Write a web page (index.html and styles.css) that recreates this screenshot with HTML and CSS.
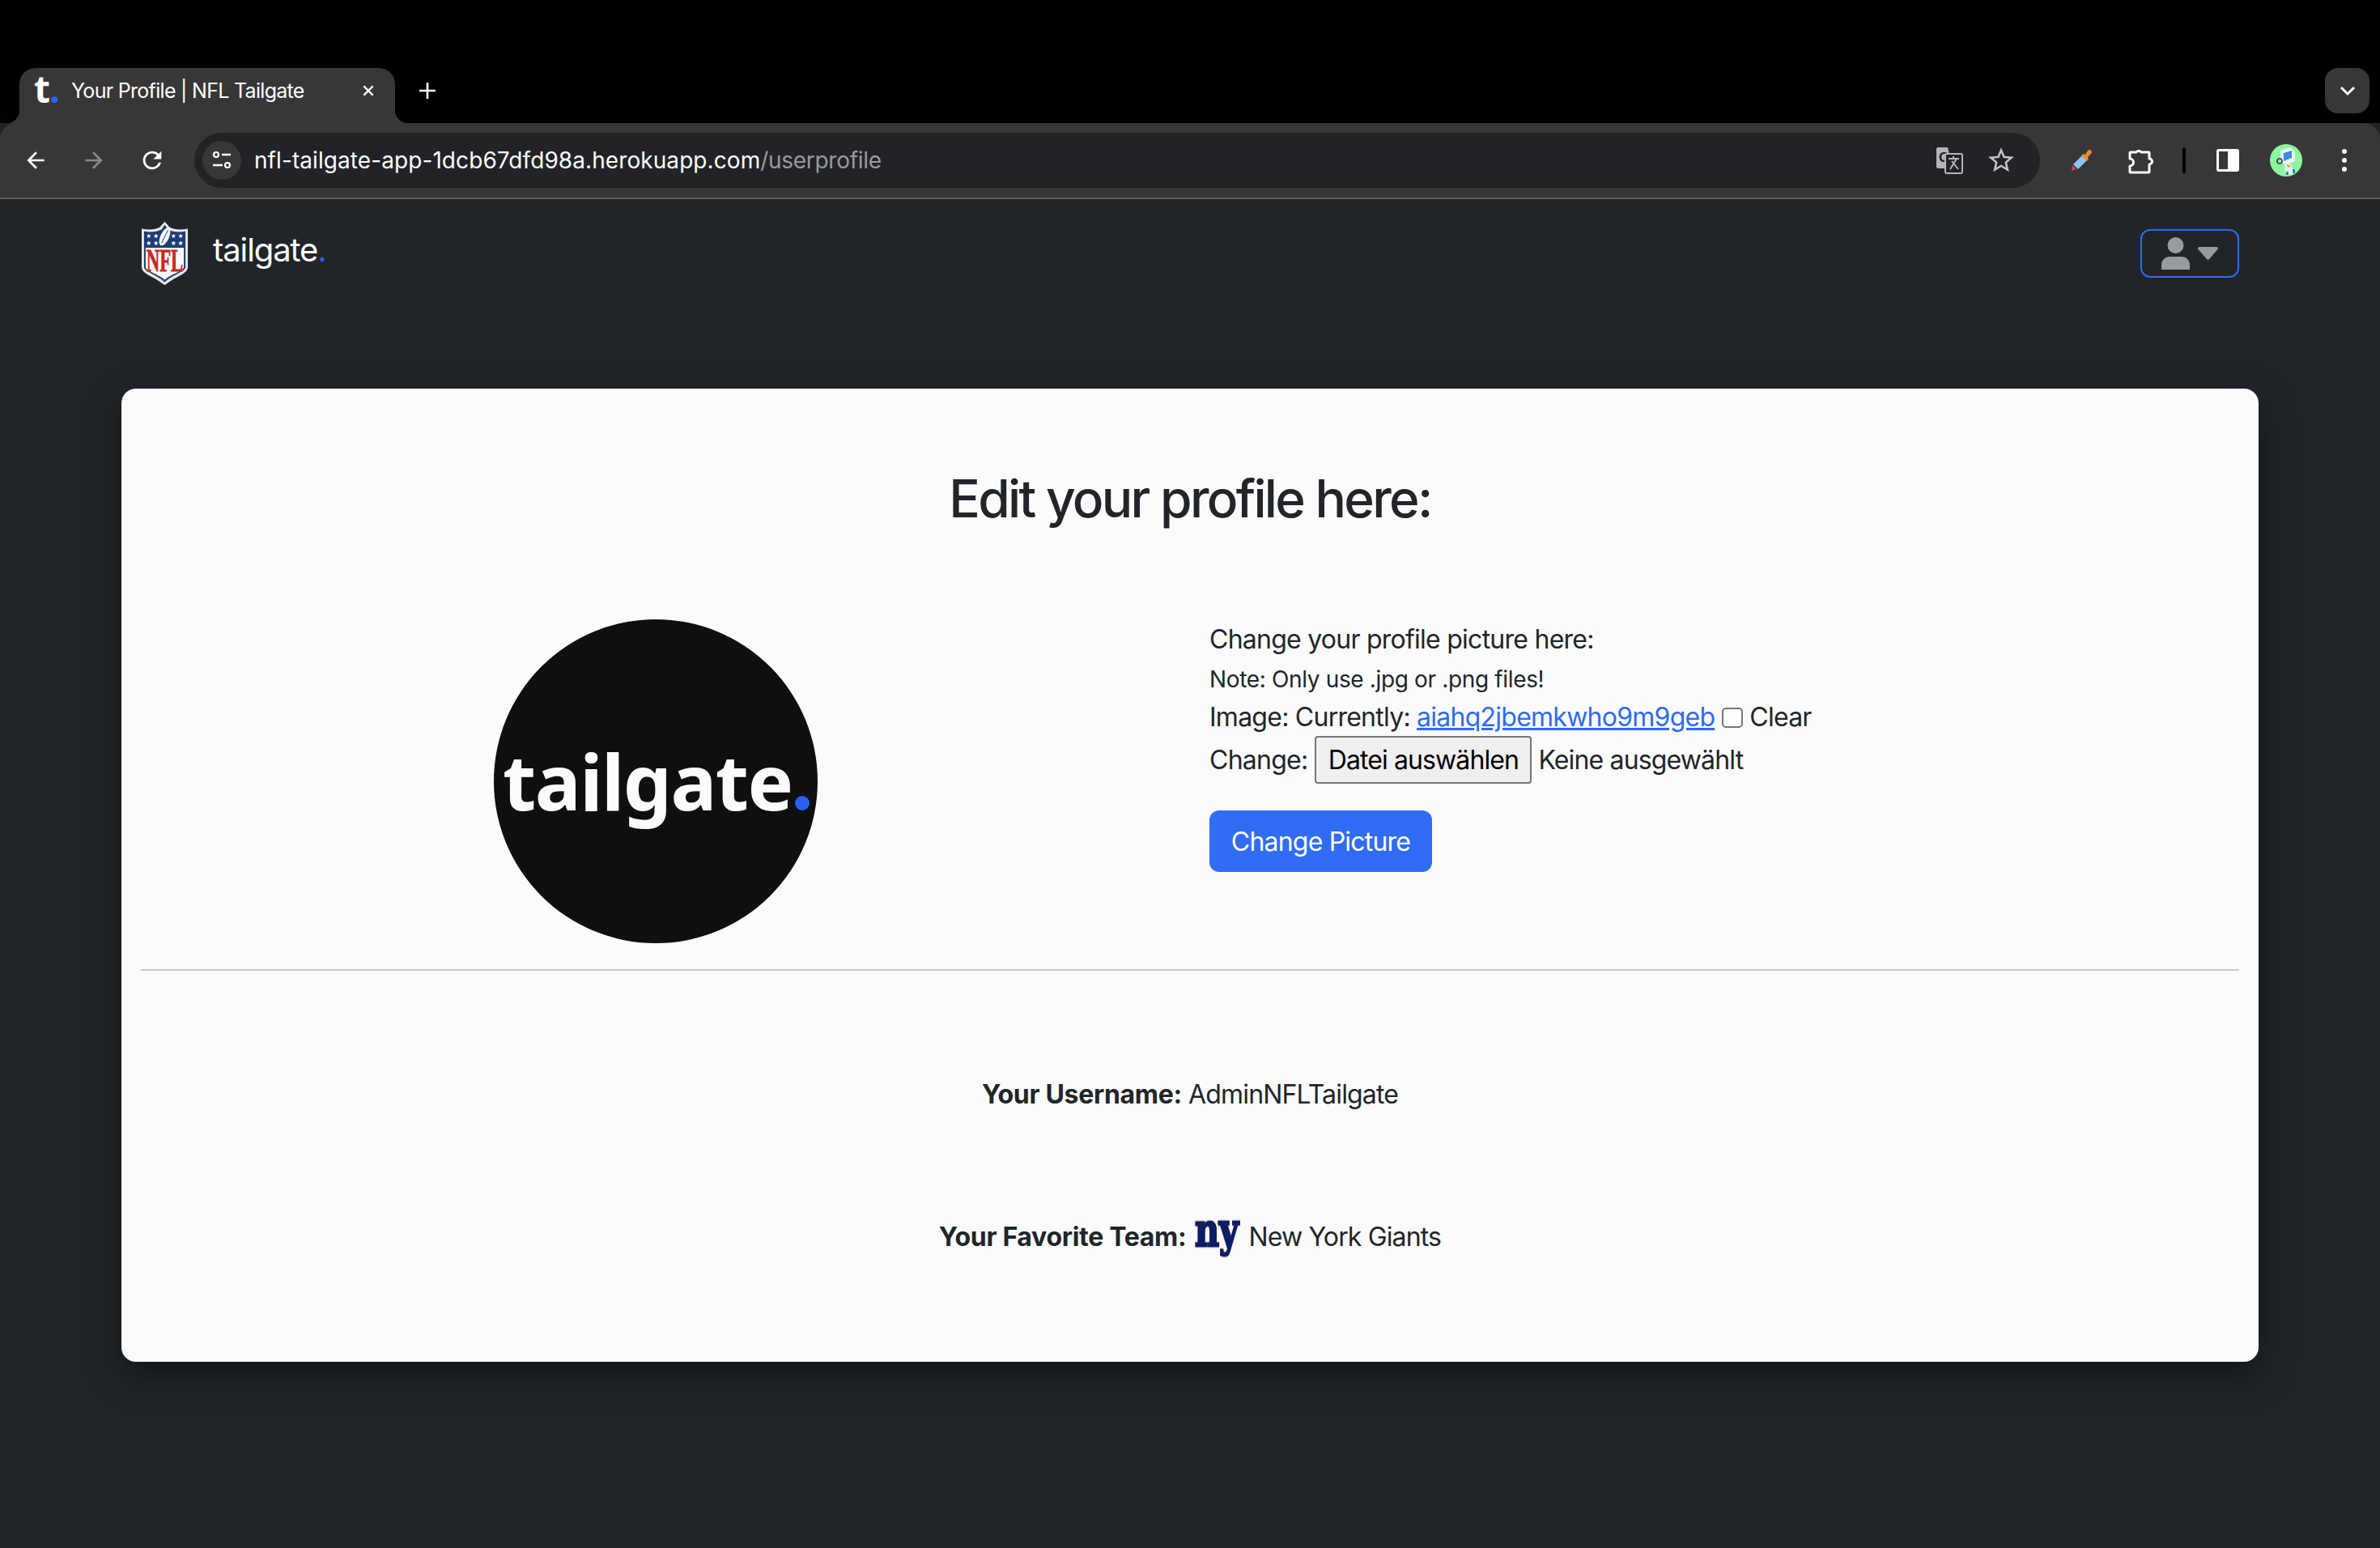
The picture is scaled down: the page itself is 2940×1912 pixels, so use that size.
FILE: index.html
```html
<!DOCTYPE html>
<html lang="en">
<head>
  <meta charset="UTF-8">
  <title>Your Profile | NFL Tailgate</title>
  <link rel="stylesheet" href="styles.css">
</head>
<body>
<!-- browser chrome -->
<div class="tabstrip">
  <div class="tab">
    <span class="favicon">t<i>.</i></span>
    <span class="tab-title">Your Profile | NFL Tailgate</span>
    <svg class="tab-close" viewBox="0 0 16 16"><path d="M3 3l10 10M13 3L3 13" stroke="#fff" stroke-width="2" fill="none"/></svg>
  </div>
  <svg class="new-tab" viewBox="0 0 24 24"><path d="M12 2v20M2 12h20" stroke="#fff" stroke-width="2.6" fill="none"/></svg>
  <div class="tab-search">
    <svg viewBox="0 0 24 24" width="24" height="24"><path d="M4 8l8 8 8-8" stroke="#fff" stroke-width="3" fill="none"/></svg>
  </div>
</div>

<div class="toolbar">
  <div class="slot"><svg viewBox="0 0 24 24" width="32" height="32"><path fill="#fff" d="M20 11H7.83l5.59-5.59L12 4l-8 8 8 8 1.41-1.41L7.83 13H20v-2z"/></svg></div>
  <div class="slot"><svg viewBox="0 0 24 24" width="32" height="32"><path fill="#8a8a8a" d="M4 11h12.17l-5.59-5.59L12 4l8 8-8 8-1.41-1.41L16.17 13H4v-2z"/></svg></div>
  <div class="slot"><svg viewBox="0 0 24 24" width="34" height="34"><path fill="#fff" d="M17.65 6.35A7.958 7.958 0 0 0 12 4c-4.42 0-7.99 3.58-7.99 8s3.57 8 7.99 8c3.73 0 6.84-2.55 7.73-6h-2.08A5.99 5.99 0 0 1 12 18c-3.31 0-6-2.69-6-6s2.69-6 6-6c1.66 0 3.14.69 4.22 1.78L13 11h7V4l-2.35 2.35z"/></svg></div>

  <div class="omnibox">
    <div class="site-chip">
      <svg viewBox="0 0 26 26" width="26" height="26">
        <circle cx="6" cy="6" r="3" fill="none" stroke="#fff" stroke-width="2.2"/>
        <path d="M13 6h11M2 19h12" stroke="#fff" stroke-width="2.6"/>
        <circle cx="20" cy="19" r="3" fill="none" stroke="#fff" stroke-width="2.2"/>
      </svg>
    </div>
    <span class="url">nfl-tailgate-app-1dcb67dfd98a.herokuapp.com<span class="url-path">/userprofile</span></span>
    <div class="omni-icons">
      <svg viewBox="0 0 33 33" width="33" height="33">
        <path d="M2 0h12l6 26H2a2 2 0 0 1-2-2V2a2 2 0 0 1 2-2z" fill="#b4b4b4"/>
        <text x="3" y="18" class="translate-g">G</text>
        <rect x="11" y="8" width="21" height="24" rx="2" fill="#222327" stroke="#b4b4b4" stroke-width="2"/>
        <path d="M15 14h13M21 11v3M17 27l8-13M19 17l8 10" stroke="#b4b4b4" stroke-width="2" fill="none"/>
      </svg>
      <svg viewBox="0 0 24 24" width="38" height="38"><path fill="#c4c4c4" d="M22 9.24l-7.19-.62L12 2 9.19 8.63 2 9.24l5.46 4.73L5.82 21 12 17.27 18.18 21l-1.63-7.03L22 9.24zM12 15.4l-3.76 2.27 1-4.28-3.32-2.88 4.38-.38L12 6.1l1.71 4.04 4.38.38-3.32 2.88 1 4.28L12 15.4z"/></svg>
    </div>
  </div>

  <div class="slot first-ext">
    <svg viewBox="0 0 26 26" width="26" height="26">
      <path d="M0 26l1-7 5 5z" fill="#d63a6b"/>
      <path d="M2 18L13 7l6 6L8 24z" fill="#8cc4ee"/>
      <path d="M12 7l7 7 2-3-1-2 4-4a2.500 2.500 0 0 0-4-4l-3 5-2-1z" fill="#ee8b2d"/>
    </svg>
  </div>
  <div class="slot">
    <svg viewBox="0 0 33 33" width="33" height="33"><path fill="none" stroke="#fff" stroke-width="3" stroke-linejoin="round" d="M4 6H11a3.500 3 0 0 1 6 0H26a1 1 0 0 1 1 1V14a3.500 3.500 0 0 1 0 7V30a1 1 0 0 1-1 1H4a1 1 0 0 1-1-1V23a4.500 4.500 0 0 0 0-9V7a1 1 0 0 1 1-1z"/></svg>
  </div>
  <div class="divider-slot"><div class="divider"></div></div>
  <div class="slot"><div class="side-panel"></div></div>
  <div class="slot">
    <div class="avatar">
      <svg viewBox="0 0 40 40" width="40" height="40">
        <path d="M13 8l12-4 6 5v12l-11 5-7-5z" fill="#e8f6fb"/>
        <path d="M17 11l10-3v9l-10 4z" fill="#3b8fdc"/>
        <path d="M18 25h8l3 8-3 4h-5l-3-5z" fill="#dff1f8"/>
        <circle cx="12" cy="21" r="3" fill="none" stroke="#21424f" stroke-width="1.6"/>
        <path d="M22 34l-1 4M29 31l1 5" stroke="#1f6aa8" stroke-width="2.4"/>
        <path d="M21 26l4 2" stroke="#e8a52c" stroke-width="2"/>
      </svg>
    </div>
  </div>
  <div class="slot">
    <div class="dots"><span></span><span></span><span></span></div>
  </div>
</div>

<!-- page -->
<nav class="navbar">
  <a class="brand" href="#">
    <svg class="nfl-logo" viewBox="0 0 60 80">
      <defs><path id="star" d="M0-3l.8 2.100 2.200.1-1.700 1.400.6 2.200L0 1.600-1.900 2.800l.6-2.200L-3-.8l2.200-.1z" fill="#fff"/></defs>
      <path d="M30 0l6 7c5 3 14 4 23 2v48c0 9-16 12-29 23C17 69 1 66 1 57V9c9 2 18 1 23-2z" fill="#e9e9e9"/>
      <path d="M30 4l4 6c6 3 15 4 22 2v45c0 6-15 9-26 19C19 66 4 63 4 57V12c7 2 16 1 22-2z" fill="#1c3c72"/>
      <path d="M6 33h48v24c0 5-14 8-24 16C20 65 6 62 6 57z" fill="#fafafa"/>
      <ellipse cx="30" cy="19" rx="5.500" ry="12" transform="rotate(24 30 19)" fill="#f4f4f4"/>
      <path d="M26 27l8-16" stroke="#1c3c72" stroke-width="1"/>
      <use href="#star" x="10" y="18"/><use href="#star" x="19" y="18"/><use href="#star" x="41" y="18"/><use href="#star" x="50" y="18"/>
      <use href="#star" x="10" y="27"/><use href="#star" x="19" y="27"/><use href="#star" x="41" y="27"/><use href="#star" x="50" y="27"/>
      <text class="nfl-text" transform="translate(30 62) scale(.58 1)">NFL</text>
    </svg>
    <span class="brand-name">tailgate<i>.</i></span>
  </a>
  <button class="user-btn">
    <svg viewBox="0 0 35 40" width="35" height="40">
      <circle cx="17.500" cy="10" r="10" fill="#9a9b9d"/>
      <path d="M0 40v-6c0-6 5-10 10-10h15c5 0 10 4 10 10v6z" fill="#9a9b9d"/>
    </svg>
    <svg viewBox="0 0 25 16" width="25" height="16"><path d="M2 0h21c2 0 2.500 2 1.500 3L14 15c-1 1-2 1-3 0L.5 3C-.5 2 0 0 2 0z" fill="#9a9b9d"/></svg>
  </button>
</nav>

<main class="card">
  <h1 class="card-title">Edit your profile here:</h1>

  <div class="picture-row">
    <div class="picture-col">
      <div class="picture"><span class="picture-text">tailgate</span><i class="picture-dot"></i></div>
    </div>
    <form class="picture-form">
      <div class="line">Change your profile picture here:</div>
      <div class="line note">Note: Only use .jpg or .png files!</div>
      <div class="line">Image: Currently:&nbsp;<a href="#">aiahq2jbemkwho9m9geb</a><input type="checkbox" class="clear-box"><span>Clear</span></div>
      <div class="line file-line">Change:<button type="button" class="file-btn">Datei auswählen</button><span class="no-file">Keine ausgewählt</span></div>
      <button type="button" class="submit-btn">Change Picture</button>
    </form>
  </div>

  <hr class="rule">

  <div class="details">
    <p class="detail"><b>Your Username:</b>&nbsp;AdminNFLTailgate</p>
    <p class="detail">
      <b>Your Favorite Team:</b>
      <svg class="ny-logo" viewBox="0 0 60 46"><text class="ny-text" transform="translate(30 34) scale(.74 1)">ny</text></svg>
      <span>New York Giants</span>
    </p>
  </div>
</main>
</body>
</html>
```
FILE: styles.css
```css
* {
  margin: 0;
  padding: 0;
  box-sizing: border-box;
}

html, body {
  height: 1912px;
  overflow: hidden;
}

body {
  background-color: #212529;
  color: #212529;
  font-family: Inter, "Liberation Sans", sans-serif;
  font-size: 32px;
  letter-spacing: -0.75px;
}

/* chrome */
.tabstrip {
  height: 152px;
  padding: 84px 13px 0 24px;
  background-color: #000;
  display: flex;
  align-items: flex-start;
}

.tab {
  position: relative;
  width: 464px;
  height: 68px;
  padding: 0 18px 12px;
  border-radius: 20px 20px 0 0;
  background-color: #373737;
  display: flex;
  align-items: center;
  color: #fff;
  font-size: 25px;
  letter-spacing: -0.7px;
}

.tab::before,
.tab::after {
  content: "";
  position: absolute;
  bottom: 0;
  width: 16px;
  height: 16px;
}

.tab::before {
  left: -16px;
  background: radial-gradient(circle at 0 0, transparent 16px, #373737 16.5px);
}

.tab::after {
  right: -16px;
  background: radial-gradient(circle at 100% 0, transparent 16px, #373737 16.5px);
}

.favicon {
  width: 46px;
  font-family: "Noto Sans", sans-serif;
  font-size: 46px;
  font-weight: 700;
  line-height: 1;
  margin-top: -6px;
  letter-spacing: 0;
}

.favicon i {
  color: #2a62f2;
  font-style: normal;
  margin-left: -1px;
}

.tab-title {
  flex: 1;
  white-space: nowrap;
}

.tab-close {
  width: 18px;
  height: 18px;
  margin-right: 6px;
}

.new-tab {
  width: 24px;
  height: 24px;
  margin: 16px 0 0 28px;
}

.tab-search {
  width: 55px;
  height: 56px;
  margin-left: auto;
  border-radius: 16px;
  background-color: #373737;
  display: flex;
  align-items: center;
  justify-content: center;
}

.toolbar {
  height: 94px;
  padding: 12px 8px 0;
  border-bottom: 2px solid #5c5c5c;
  border-radius: 20px 20px 0 0;
  background-color: #373737;
  display: flex;
  align-items: flex-start;
}

.slot {
  width: 72px;
  height: 68px;
  flex: none;
  display: flex;
  align-items: center;
  justify-content: center;
}

.first-ext {
  margin-left: 16px;
}

.omnibox {
  width: 2280px;
  height: 68px;
  margin-left: 16px;
  padding: 0 8px 0 10px;
  border-radius: 34px;
  background-color: #222327;
  display: flex;
  align-items: center;
  flex: none;
}

.site-chip {
  width: 48px;
  height: 48px;
  border-radius: 50%;
  background-color: #373737;
  display: flex;
  align-items: center;
  justify-content: center;
}

.url {
  margin-left: 16px;
  color: #fff;
  font-size: 28px;
  letter-spacing: 0.08px;
  white-space: nowrap;
}

.url-path {
  color: #9a9a9a;
  letter-spacing: -0.3px;
}

.omni-icons {
  margin-left: auto;
  padding-right: 21px;
  display: flex;
  align-items: center;
  gap: 28px;
}

.translate-g {
  font-family: "Liberation Sans", sans-serif;
  font-size: 17px;
  font-weight: 700;
  fill: #222327;
}

.divider-slot {
  width: 36px;
  height: 68px;
  flex: none;
  display: flex;
  align-items: center;
  justify-content: center;
}

.divider {
  width: 4px;
  height: 32px;
  border-radius: 2px;
  background-color: #000;
}

.side-panel {
  width: 28px;
  height: 28px;
  border: 3px solid #fff;
  border-radius: 3px;
  background: linear-gradient(to right, transparent 50%, #fff 50%);
}

.avatar {
  width: 40px;
  height: 40px;
  border-radius: 50%;
  background-color: #8ef59c;
  overflow: hidden;
}

.avatar svg {
  display: block;
}

.dots {
  display: flex;
  flex-direction: column;
  gap: 5px;
}

.dots span {
  width: 6px;
  height: 6px;
  border-radius: 50%;
  background-color: #fff;
}

/* navbar */
.navbar {
  height: 107px;
  padding: 27px 174px 0;
  display: flex;
  align-items: flex-start;
  justify-content: space-between;
}

.brand {
  display: flex;
  align-items: center;
  height: 80px;
  gap: 30px;
  color: #fff;
  text-decoration: none;
}

.nfl-logo {
  width: 59px;
  height: 80px;
  display: block;
}

.nfl-text {
  font-family: "Liberation Serif", serif;
  font-size: 40px;
  font-weight: 700;
  fill: #c8281e;
  stroke: #c8281e;
  stroke-width: .8px;
  text-anchor: middle;
  letter-spacing: 0;
}

.brand-name {
  margin-top: -10px;
  font-size: 40px;
  font-weight: 400;
  letter-spacing: -1.1px;
}

.brand-name i {
  color: #2a62f2;
  font-style: normal;
}

.user-btn {
  width: 122px;
  height: 60px;
  margin-top: 10px;
  border: 2px solid #2f6bf0;
  border-radius: 12px;
  background: none;
  display: flex;
  align-items: center;
  justify-content: center;
  gap: 10px;
}

/* card */
.card {
  width: 2640px;
  height: 1202px;
  margin: 127px 0 0 150px;
  padding-top: 97px;
  border-radius: 18px;
  background-color: #fbfbfb;
  box-shadow: 0 16px 48px rgba(0, 0, 0, .45);
}

.card-title {
  font-size: 64px;
  font-weight: 500;
  line-height: 77px;
  text-align: center;
  letter-spacing: -2.7px;
}

.picture-row {
  margin-top: 111px;
  display: grid;
  grid-template-columns: 1fr 1fr;
}

.picture-col {
  display: flex;
  justify-content: center;
}

.picture {
  position: relative;
  width: 400px;
  height: 400px;
  border-radius: 50%;
  background-color: #0f0f0f;
}

.picture-text {
  position: absolute;
  left: 11px;
  top: 152px;
  color: #fbfbfb;
  font-family: "Noto Sans", sans-serif;
  font-size: 95px;
  font-weight: 700;
  line-height: 1;
  letter-spacing: -1.5px;
  white-space: nowrap;
}

.picture-dot {
  position: absolute;
  left: 372px;
  top: 218px;
  width: 18px;
  height: 18px;
  border-radius: 50%;
  background-color: #2a5ff5;
}

.picture-form {
  padding: 1px 24px 0;
}

.line {
  height: 48px;
  line-height: 48px;
  display: flex;
  align-items: center;
  white-space: nowrap;
}

.note {
  padding-top: 2px;
  font-size: 28px;
  letter-spacing: -0.35px;
}

.line a {
  color: #2f6bf0;
}

.clear-box {
  appearance: none;
  width: 26px;
  height: 25px;
  margin: 0 8px 0 9px;
  border: 2px solid #767676;
  border-radius: 5px;
  background-color: #fff;
}

.file-line {
  height: 59px;
  margin-top: -1px;
  padding-top: 1px;
}

.file-btn {
  width: 268px;
  height: 59px;
  margin: -1px 8px 0 9px;
  border: 2px solid #767676;
  border-radius: 4px;
  background-color: #efefef;
  color: #000;
  font-family: inherit;
  font-size: 32px;
  letter-spacing: -0.9px;
}

.no-file {
  letter-spacing: -0.85px;
}

.submit-btn {
  width: 275px;
  height: 76px;
  margin-top: 33px;
  border: none;
  border-radius: 12px;
  background-color: #316cf4;
  color: #fff;
  font-family: inherit;
  font-size: 32px;
  letter-spacing: -0.8px;
}

.rule {
  height: 2px;
  margin: 32px 24px 0;
  border: none;
  background-color: #c8c8c8;
}

.details {
  padding-top: 129px;
  display: flex;
  flex-direction: column;
  align-items: center;
  gap: 128px;
}

.detail {
  height: 48px;
  line-height: 48px;
  display: flex;
  align-items: center;
  white-space: nowrap;
  letter-spacing: -0.85px;
}

.detail b {
  letter-spacing: -0.3px;
}

.ny-logo {
  width: 60px;
  height: 46px;
  margin: 0 9px 0 8px;
  overflow: visible;
}

.ny-text {
  font-family: "DejaVu Serif", serif;
  font-size: 56px;
  font-weight: 700;
  fill: #0b1f66;
  stroke: #0b1f66;
  stroke-width: 2.5px;
  filter: drop-shadow(0 0 1px #b5343c);
  text-anchor: middle;
  letter-spacing: 0;
}
```
